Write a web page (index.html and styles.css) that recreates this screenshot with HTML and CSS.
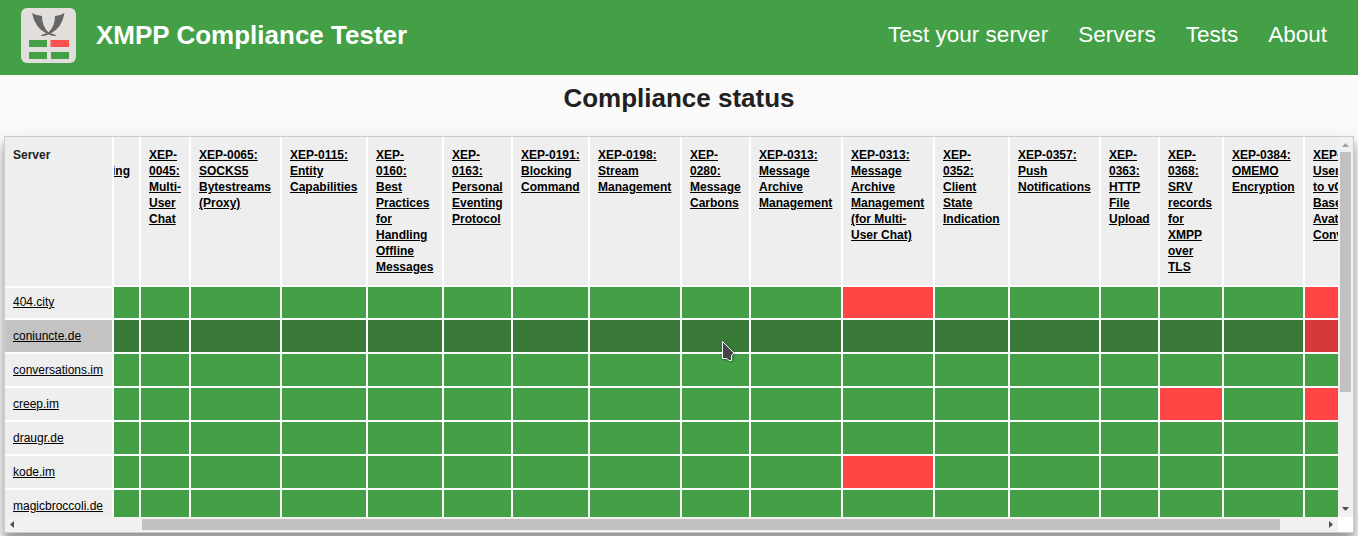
FILE: index.html
```
<!DOCTYPE html>
<html lang="en">
<head>
<meta charset="utf-8">
<title>XMPP Compliance Tester</title>
<link rel="stylesheet" href="styles.css">
</head>
<body>
<header class="topbar">
  <svg class="logo" viewBox="0 0 55 55" aria-hidden="true">
    <rect width="55" height="55" rx="6" fill="#e2dedb"/>
    <path d="M11 5Q15 7.500 21 8Q21 18 27.500 24.500Q34 18 34 8Q40 7.500 43.500 5Q41 20 29.500 25.500Q34 26 35.500 28Q31 28 27.500 26.500Q24 28 19.500 28Q21 26 25.500 25.500Q14 20 11 5Z" fill="#666"/>
    <path d="M8 32h18v7H8zM8 44h18v7H8zM30 44h18v7H30z" fill="#43a047"/>
    <path d="M29.500 32h18.500v7H29.500z" fill="#ff5050"/>
  </svg>
  <h1 class="brand">XMPP Compliance Tester</h1>
  <nav class="menu"><a>Test your server</a><a>Servers</a><a>Tests</a><a>About</a></nav>
</header>
<h2 class="title">Compliance status</h2>
<main class="panel">
  <div class="viewport">
    <div class="row head" id="head">
      <div class="name">Server</div>
      <div class="xep clipped"><a><br>ing</a></div>
      <div class="xep"><a>XEP-<br>0045:<br>Multi-<br>User<br>Chat</a></div>
      <div class="xep"><a>XEP-0065:<br>SOCKS5<br>Bytestreams<br>(Proxy)</a></div>
      <div class="xep"><a>XEP-0115:<br>Entity<br>Capabilities</a></div>
      <div class="xep"><a>XEP-<br>0160:<br>Best<br>Practices<br>for<br>Handling<br>Offline<br>Messages</a></div>
      <div class="xep"><a>XEP-<br>0163:<br>Personal<br>Eventing<br>Protocol</a></div>
      <div class="xep"><a>XEP-0191:<br>Blocking<br>Command</a></div>
      <div class="xep"><a>XEP-0198:<br>Stream<br>Management</a></div>
      <div class="xep"><a>XEP-<br>0280:<br>Message<br>Carbons</a></div>
      <div class="xep"><a>XEP-0313:<br>Message<br>Archive<br>Management</a></div>
      <div class="xep"><a>XEP-0313:<br>Message<br>Archive<br>Management<br>(for Multi-<br>User Chat)</a></div>
      <div class="xep"><a>XEP-<br>0352:<br>Client<br>State<br>Indication</a></div>
      <div class="xep"><a>XEP-0357:<br>Push<br>Notifications</a></div>
      <div class="xep"><a>XEP-<br>0363:<br>HTTP<br>File<br>Upload</a></div>
      <div class="xep"><a>XEP-<br>0368:<br>SRV<br>records<br>for<br>XMPP<br>over<br>TLS</a></div>
      <div class="xep"><a>XEP-0384:<br>OMEMO<br>Encryption</a></div>
      <div class="xep"><a>XEP-0398:<br>User Avatar<br>to vCard-<br>Based<br>Avatars<br>Conversion</a></div>
    </div>
    <div class="row first"><div class="name"><a>404.city</a></div><i></i><i></i><i></i><i></i><i></i><i></i><i></i><i></i><i></i><i></i><i class="fail"></i><i></i><i></i><i></i><i></i><i></i><i class="fail"></i></div>
    <div class="row active"><div class="name"><a>coniuncte.de</a></div><i></i><i></i><i></i><i></i><i></i><i></i><i></i><i></i><i></i><i></i><i></i><i></i><i></i><i></i><i></i><i></i><i class="fail"></i></div>
    <div class="row"><div class="name"><a>conversations.im</a></div><i></i><i></i><i></i><i></i><i></i><i></i><i></i><i></i><i></i><i></i><i></i><i></i><i></i><i></i><i></i><i></i><i></i></div>
    <div class="row"><div class="name"><a>creep.im</a></div><i></i><i></i><i></i><i></i><i></i><i></i><i></i><i></i><i></i><i></i><i></i><i></i><i></i><i></i><i class="fail"></i><i></i><i class="fail"></i></div>
    <div class="row"><div class="name"><a>draugr.de</a></div><i></i><i></i><i></i><i></i><i></i><i></i><i></i><i></i><i></i><i></i><i></i><i></i><i></i><i></i><i></i><i></i><i></i></div>
    <div class="row"><div class="name"><a>kode.im</a></div><i></i><i></i><i></i><i></i><i></i><i></i><i></i><i></i><i></i><i></i><i class="fail"></i><i></i><i></i><i></i><i></i><i></i><i></i></div>
    <div class="row"><div class="name"><a>magicbroccoli.de</a></div><i></i><i></i><i></i><i></i><i></i><i></i><i></i><i></i><i></i><i></i><i></i><i></i><i></i><i></i><i></i><i></i><i></i></div>
  </div>
  <div class="vbar">
    <svg width="15" height="15"><path d="M4 10l3.500-4 3.500 4z" fill="#a3a3a3"/></svg>
    <div class="vthumb"></div>
    <svg width="15" height="15"><path d="M4 5h7l-3.500 4z" fill="#505050"/></svg>
  </div>
  <div class="hbar">
    <svg width="15" height="15"><path d="M9 4v7l-4-3.500z" fill="#505050"/></svg>
    <div class="htrack"><div class="hthumb"></div></div>
    <svg width="15" height="15"><path d="M6 4v7l4-3.500z" fill="#505050"/></svg>
  </div>
  <div class="corner"></div>
</main>
<svg class="cursor" viewBox="0 0 16 24" aria-hidden="true"><path d="M1.500 1.500V18.500H6L8 20.500H10.500V15.500L13 13Z" fill="#444" stroke="#fff"/></svg>
</body>
</html>
```
FILE: styles.css
```
* { box-sizing: border-box; }
body {
  margin: 0;
  height: 536px;
  overflow: hidden;
  background: #fafafa;
  color: #212121;
  font-family: "Liberation Sans", Arial, sans-serif;
}
.topbar {
  display: flex;
  align-items: center;
  height: 75px;
  padding: 0 31px 4px 21px;
  background: #43a047;
  color: #fff;
}
.logo { width: 55px; height: 55px; margin-right: 20px; }
.brand { margin: 0; padding-bottom: 2px; font-size: 26px; line-height: 30px; }
.menu { display: flex; gap: 30px; margin-left: auto; padding-bottom: 2px; font-size: 22.5px; line-height: 26px; }
.title { margin: 0; padding-top: 8px; height: 61px; font-size: 26px; line-height: 30px; text-align: center; }
.panel {
  display: grid;
  grid-template: 380px 15px / 1333px 15px;
  width: 1350px;
  margin-left: 4px;
  border: 1px solid #ccc;
  background: #fff;
  box-shadow: 0 10px 20px rgba(0, 0, 0, .19), 0 8px 8px rgba(0, 0, 0, .27);
}
.viewport { overflow: hidden; font-size: 12px; line-height: 16px; }
.row {
  display: grid;
  grid-template-columns: 107px 25px 48px 89px 84px 74px 67px 75px 90px 67px 90px 90px 73px 89px 57px 62px 79px 100px;
  column-gap: 2px;
  height: 32px;
  margin-bottom: 2px;
}
.name { padding: 8px; background: #eee; white-space: nowrap; }
.row i { background: #43a047; }
.row .fail { background: #f44; }
.head { height: 148px; font-weight: bold; }
.head .name, .xep { padding-top: 10px; }
.head .name { margin-bottom: -1px; }
.xep { padding-left: 8px; background: #eee; white-space: nowrap; overflow: hidden; }
.clipped { padding-left: 0; }
a { color: inherit; }
.viewport a { color: #000; text-decoration: underline; }
.clipped a { display: block; margin-left: -2px; }
.first { height: 31px; }
.first .name { margin-top: 1px; padding-top: 6px; }
.active .name { background: #c3c3c3; }
.active i { background: #387938; }
.active .fail { background: #d53939; }
.vbar, .hbar { display: flex; background: #f1f1f1; }
.vbar { flex-direction: column; justify-content: space-between; }
.vbar svg, .hbar svg { display: block; flex: none; }
.vthumb { height: 240px; margin: 0 2px auto; background: #c1c1c1; }
.htrack { flex: 1; padding: 2px 0 2px 122px; }
.hthumb { width: 1138px; height: 11px; background: #c1c1c1; }
.corner { background: #fff; }
.cursor { position: absolute; left: 721px; top: 340px; width: 16px; height: 24px; filter: drop-shadow(1px 1px 1px rgba(0, 0, 0, .3)); }
```
